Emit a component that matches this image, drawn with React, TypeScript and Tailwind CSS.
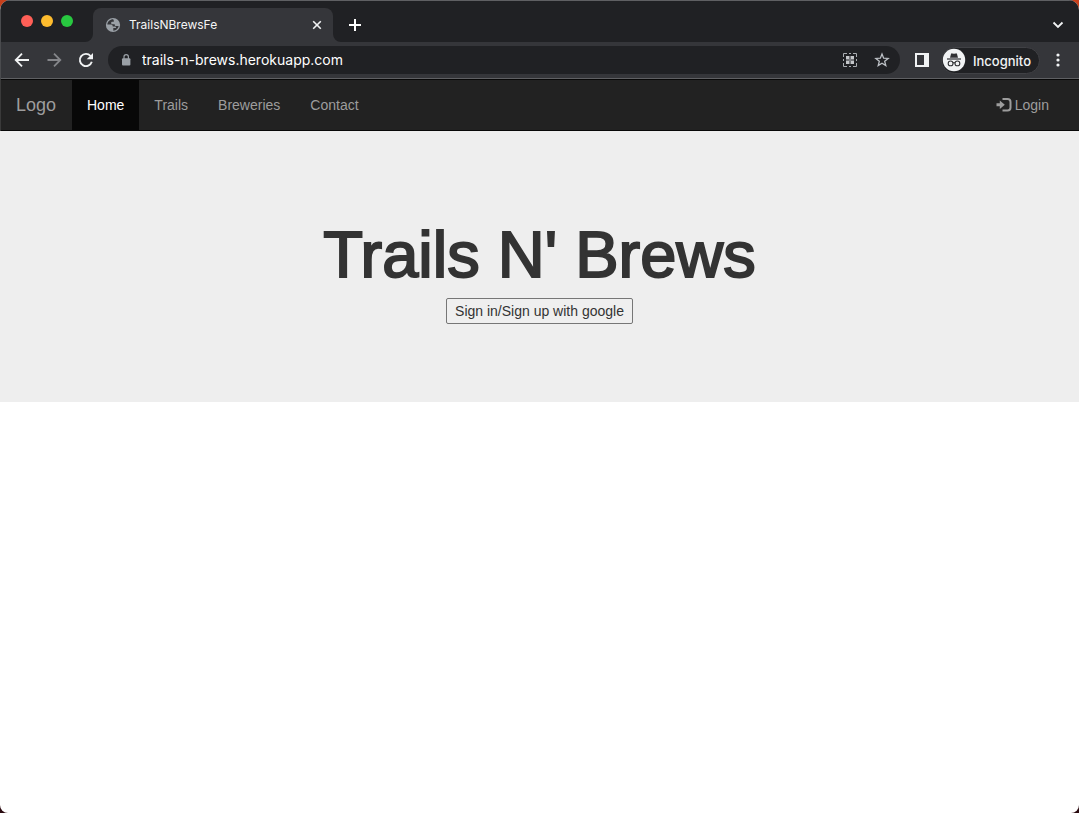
import React from 'react';

const navItems = ['Home', 'Trails', 'Breweries', 'Contact'];

function TabStrip() {
  return (
    <div className="flex h-[42px] items-end justify-between border-t border-[#5f6063] bg-[#202124]">
      <div className="flex items-end">
        <div className="flex h-[41px] w-[92px] items-center gap-2 pb-0.5 pl-5">
          <span className="size-3 rounded-full bg-[#ff5f57]" />
          <span className="size-3 rounded-full bg-[#febc2e]" />
          <span className="size-3 rounded-full bg-[#28c840]" />
        </div>
        <div className="relative flex h-[34px] w-60 items-center rounded-t-lg bg-[#35363a] pr-2.5 pl-3">
          <svg className="absolute bottom-0 -left-2 size-2" viewBox="0 0 8 8" aria-hidden="true">
            <path d="M8 0v8H0a8 8 0 0 0 8-8z" fill="#35363a" />
          </svg>
          <svg className="absolute -right-2 bottom-0 size-2" viewBox="0 0 8 8" aria-hidden="true">
            <path d="M0 0v8h8a8 8 0 0 1-8-8z" fill="#35363a" />
          </svg>
          <svg className="size-4" viewBox="0 0 16 16" aria-hidden="true">
            <circle cx="8" cy="8" r="7.1" fill="#9aa0a6" />
            <path
              d="M8.2 2.3C5 2.3 2.5 4.600 2.300 7.500h3.600c1 0 1.800.6 1.800 1.500v.6h2c.9 0 1.300.5 1.300 1.100v.4H8.300v2.600c2.900 0 5-1.900 5.400-4.600h-2.500c-.9 0-1.500-.5-1.500-1.300v-.6H7.500c-.9 0-1.400-.5-1.400-1.200s.6-1.200 1.400-1.200h1.300V3.500z"
              fill="#35363a"
            />
          </svg>
          <span className="ml-2 flex-1 text-[12px] text-[#f5f5f5]">TrailsNBrewsFe</span>
          <button type="button" aria-label="Close tab" className="flex size-3 items-center justify-center">
            <svg className="size-3" viewBox="0 0 12 12" stroke="#f1f3f4" strokeWidth="1.6" aria-hidden="true">
              <path d="M2.2 2.2l7.6 7.6M9.8 2.2L2.2 9.8" />
            </svg>
          </button>
        </div>
        <button type="button" aria-label="New tab" className="flex h-[34px] w-11 items-center justify-center">
          <svg className="size-3" viewBox="0 0 12 12" stroke="#fff" strokeWidth="2" aria-hidden="true">
            <path d="M6 0v12M0 6h12" />
          </svg>
        </button>
      </div>
      <button type="button" aria-label="Search tabs" className="flex h-[34px] w-[42px] items-center justify-center">
        <svg className="size-3" viewBox="0 0 12 12" fill="none" stroke="#f1f3f4" strokeWidth="1.8" aria-hidden="true">
          <path d="M1.5 3.5L6 8l4.5-4.5" />
        </svg>
      </button>
    </div>
  );
}

function Toolbar() {
  return (
    <div className="flex h-[37px] items-center border-b border-[#5f6063] bg-[#35363a] px-[13px]">
      <div className="flex w-[94px] items-center gap-4">
        <button type="button" aria-label="Back">
          <svg className="block size-4" viewBox="0 0 16 16" fill="none" stroke="#f1f3f4" strokeWidth="1.8" aria-hidden="true">
            <path d="M15 8H2.3M8 1.7L1.7 8 8 14.3" />
          </svg>
        </button>
        <button type="button" aria-label="Forward">
          <svg className="block size-4" viewBox="0 0 16 16" fill="none" stroke="#85868a" strokeWidth="1.8" aria-hidden="true">
            <path d="M1.5 8h12.7M8 1.7L14.3 8 8 14.3" />
          </svg>
        </button>
        <button type="button" aria-label="Reload">
          <svg className="block size-4" viewBox="0 0 16 16" fill="none" aria-hidden="true">
            <path d="M13.8 9.8A6.1 6.1 0 1 1 12.6 4" stroke="#f1f3f4" strokeWidth="1.9" />
            <path d="M15 1v6.3H8.7z" fill="#f1f3f4" />
          </svg>
        </button>
      </div>
      <div className="flex h-7 flex-1 items-center rounded-full bg-[#202124] pr-2.5 pl-3">
        <svg className="h-3.5 w-3" viewBox="0 0 12 14" aria-hidden="true">
          <rect x="2" y="5.3" width="8.4" height="7.2" rx="1" fill="#9aa0a6" />
          <path d="M4 6V3.8a2.2 2.2 0 0 1 4.4 0V6" fill="none" stroke="#9aa0a6" strokeWidth="1.2" />
        </svg>
        <input
          type="text"
          aria-label="Address"
          defaultValue="trails-n-brews.herokuapp.com"
          className="ml-2.5 h-6 min-w-0 flex-1 bg-transparent pb-0.5 text-[14px] text-white outline-none"
        />
        <div className="flex items-center gap-4">
          <button type="button" aria-label="QR code">
            <svg className="block size-4" viewBox="0 0 16 16" fill="none" stroke="#a9adb1" aria-hidden="true">
              <path d="M1.5 5V1.500H5M11 1.500h3.500V5M14.500 11v3.500H11M5 14.500H1.500V11M7 1.500h2M7 14.500h2M1.500 7v2M14.500 7v2" />
              <path d="M4 4h3.500v3.500H4zM8.500 4H12v3.500H8.500zM4 8.500h3.500V12H4zM8.500 8.500H12V12H8.500z" fill="#c4c7ca" stroke="none" />
              <path d="M7 8h2" />
            </svg>
          </button>
          <button type="button" aria-label="Bookmark">
            <svg className="block size-4" viewBox="0 0 16 16" fill="none" stroke="#bdc1c6" strokeWidth="1.3" aria-hidden="true">
              <path d="M8 2l1.65 4.15 4.5.3-3.45 2.85 1.1 4.35L8 11.25 4.2 13.65 5.3 9.3 1.85 6.45l4.5-.3z" />
            </svg>
          </button>
        </div>
      </div>
      <button type="button" aria-label="Side panel" className="ml-3.5">
        <svg className="block size-4" viewBox="0 0 16 16" aria-hidden="true">
          <path d="M1 1h14v14H1zM3 3v10h7V3z" fill="#f1f3f4" fillRule="evenodd" />
        </svg>
      </button>
      <button
        type="button"
        className="ml-[11px] flex h-[27px] items-center rounded-full border border-[#404145] bg-[#202124] pr-2 text-[13px] font-medium text-[#f1f3f4]"
      >
        <svg className="mr-[7px] size-6" viewBox="0 0 24 24" aria-hidden="true">
          <circle cx="12" cy="12" r="11.2" fill="#f1f3f4" />
          <path d="M8 9.7l1-3.7q.3-.8 1.2-.6l1.8.4 1.8-.4q.9-.2 1.2.6l1 3.7z" fill="#303134" />
          <path d="M5 11h14" stroke="#303134" strokeWidth="1.2" />
          <g fill="none" stroke="#303134" strokeWidth="1.1">
            <circle cx="8.6" cy="15.4" r="2.4" />
            <circle cx="15.4" cy="15.4" r="2.4" />
            <path d="M11 15q1-.7 2 0" />
          </g>
        </svg>
        <span className="pt-0.5 leading-5">Incognito</span>
      </button>
      <button type="button" aria-label="Menu" className="ml-2.5">
        <svg className="block size-4" viewBox="0 0 16 16" fill="#f1f3f4" aria-hidden="true">
          <circle cx="8" cy="3" r="1.6" />
          <circle cx="8" cy="8" r="1.6" />
          <circle cx="8" cy="13" r="1.6" />
        </svg>
      </button>
    </div>
  );
}

function SiteNav() {
  return (
    <nav className="flex h-[52px] items-stretch border-y border-[#080808] bg-[#222222] pr-[15px] text-[14px] text-[#9d9d9d]">
      <a href="#" className="flex w-[71px] items-center pl-[15px] text-[18px]">
        Logo
      </a>
      <ul className="flex">
        {navItems.map((item, index) => (
          <li key={item} className="flex">
            <a
              href="#"
              className={
                index === 0
                  ? 'flex items-center bg-[#080808] px-[15px] text-white'
                  : 'flex items-center px-[15px]'
              }
            >
              {item}
            </a>
          </li>
        ))}
      </ul>
      <a href="#" className="ml-auto flex items-center gap-[3px] px-[15px]">
        <svg className="size-4" viewBox="0 0 16 16" aria-hidden="true">
          <path d="M.5 6.300h3.300V3.500L8.800 7.800 3.800 12.100V9.300H.5z" fill="#9d9d9d" />
          <path d="M6.500 2h5Q14.500 2 14.500 5v5.500q0 3-3 3h-5" fill="none" stroke="#9d9d9d" strokeWidth="2" />
        </svg>
        Login
      </a>
    </nav>
  );
}

export default function App() {
  return (
    <div className="min-h-screen bg-[linear-gradient(#c8401c,#2a0a10)] font-['Liberation_Sans',Arial,sans-serif]">
      <div className="flex min-h-screen flex-col overflow-hidden rounded-t-[10px] rounded-b-lg bg-white">
        <header className="border-l border-[#4a4b4e] font-['Inter',sans-serif]">
          <TabStrip />
          <Toolbar />
        </header>
        <div className="border-l border-[#3a3a3a]">
          <SiteNav />
        </div>
        <main>
          <section className="flex flex-col items-center bg-[#eeeeee] pt-[90px] pb-[78px] text-[#333333]">
            <h1 className="text-center text-[65px] leading-[68px] [-webkit-text-stroke:2px_#333333]">
              Trails N&apos; Brews
            </h1>
            <button
              type="button"
              className="mt-[9px] h-[26px] rounded-[2px] border border-[#767676] bg-[#efefef] px-2 text-[14px] leading-5"
            >
              Sign in/Sign up with google
            </button>
          </section>
        </main>
      </div>
    </div>
  );
}
